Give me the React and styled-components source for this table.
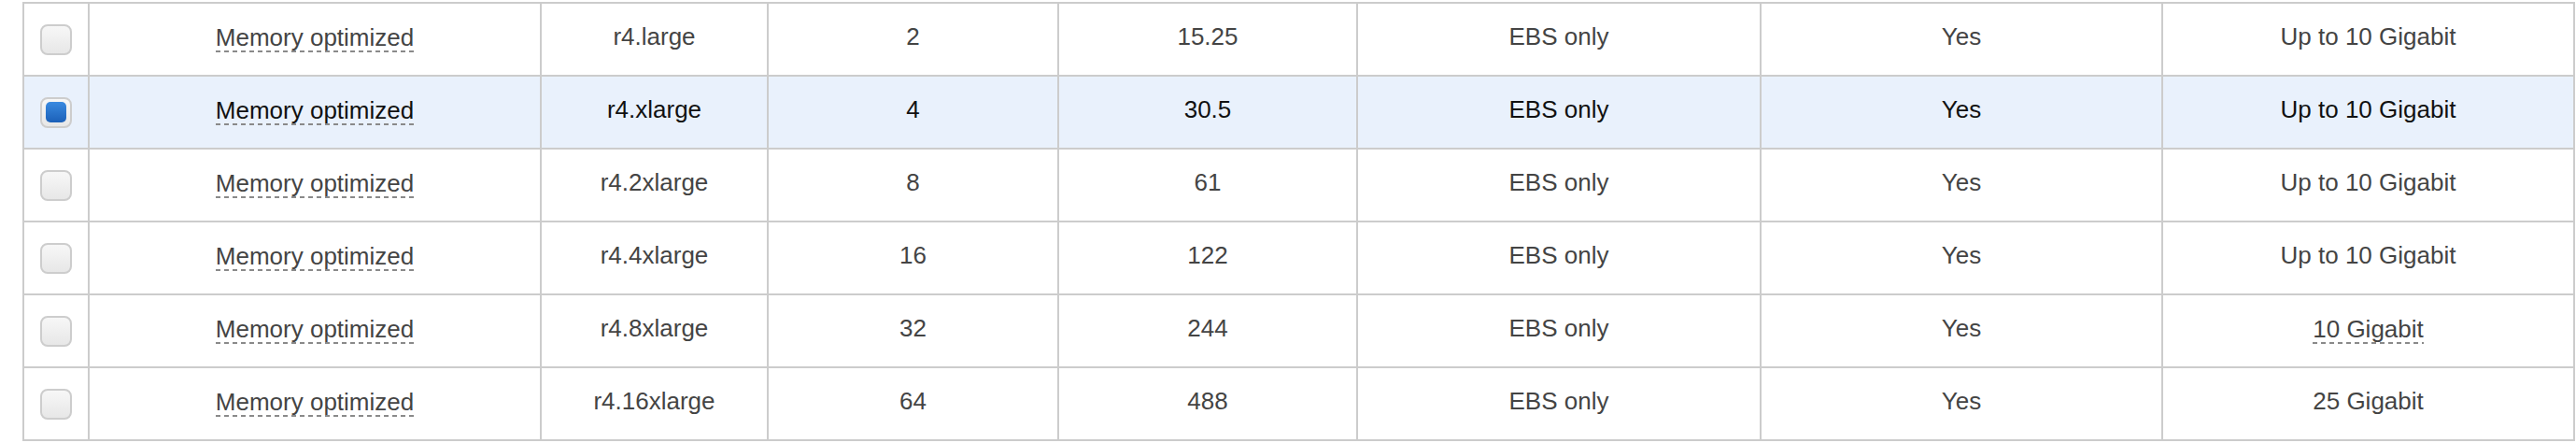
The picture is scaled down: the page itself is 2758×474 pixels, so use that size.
import React from "react";
import styled, { createGlobalStyle } from "styled-components";

const GlobalStyle = createGlobalStyle`
  html, body {
    margin: 0;
    padding: 0;
    background: #ffffff;
  }
  body {
    font-family: "Liberation Sans", Arial, Helvetica, sans-serif;
  }
`;

const Page = styled.div`
  padding: 2px 0 0 24px;
`;

const Table = styled.div`
  display: grid;
  grid-template-columns: 68px 482px 241px 309px 318px 430px 428px 439px;
  grid-auto-rows: 76px;
  gap: 2px;
  padding: 2px;
  background: #cccccc;
  width: max-content;
`;

const Row = styled.div`
  display: contents;
`;

const Cell = styled.div`
  box-sizing: border-box;
  background: ${(p) => (p.$selected ? "#e9f1fc" : "#ffffff")};
  color: ${(p) => (p.$selected ? "#111111" : "#444444")};
  display: flex;
  align-items: center;
  justify-content: center;
  padding-bottom: ${(p) => (p.$check ? "0" : "6px")};
  font-size: 26px;
  line-height: 1;
  white-space: nowrap;
`;

const Hint = styled.span`
  display: inline-block;
  padding-bottom: 3px;
  margin-top: 5px;
  background-image: repeating-linear-gradient(
    to right,
    #8a8a8a 0,
    #8a8a8a 5px,
    transparent 5px,
    transparent 9px
  );
  background-size: 100% 2px;
  background-repeat: no-repeat;
  background-position: left bottom;
`;

const Box = styled.span`
  box-sizing: border-box;
  width: 34px;
  height: 33px;
  border: 2px solid #cdcdcd;
  border-radius: 8px;
  background: linear-gradient(#f7f7f7, #e7e7e7);
  display: flex;
  align-items: center;
  justify-content: center;
`;

const Tick = styled.span`
  width: 22px;
  height: 22px;
  border-radius: 5px;
  background: linear-gradient(#3a8ae0, #1b60b8);
`;

const rows = [
  { type: "r4.large", cpu: "2", mem: "15.25", net: "Up to 10 Gigabit" },
  { type: "r4.xlarge", cpu: "4", mem: "30.5", net: "Up to 10 Gigabit", selected: true },
  { type: "r4.2xlarge", cpu: "8", mem: "61", net: "Up to 10 Gigabit" },
  { type: "r4.4xlarge", cpu: "16", mem: "122", net: "Up to 10 Gigabit" },
  { type: "r4.8xlarge", cpu: "32", mem: "244", net: "10 Gigabit", netHint: true },
  { type: "r4.16xlarge", cpu: "64", mem: "488", net: "25 Gigabit" },
];

export default function App() {
  return (
    <>
      <GlobalStyle />
      <Page>
        <Table>
          {rows.map((r) => (
            <Row key={r.type}>
              <Cell $selected={r.selected} $check>
                <Box>{r.selected && <Tick />}</Box>
              </Cell>
              <Cell $selected={r.selected}>
                <Hint>Memory optimized</Hint>
              </Cell>
              <Cell $selected={r.selected}>{r.type}</Cell>
              <Cell $selected={r.selected}>{r.cpu}</Cell>
              <Cell $selected={r.selected}>{r.mem}</Cell>
              <Cell $selected={r.selected}>EBS only</Cell>
              <Cell $selected={r.selected}>Yes</Cell>
              <Cell $selected={r.selected}>
                {r.netHint ? <Hint>{r.net}</Hint> : r.net}
              </Cell>
            </Row>
          ))}
        </Table>
      </Page>
    </>
  );
}
